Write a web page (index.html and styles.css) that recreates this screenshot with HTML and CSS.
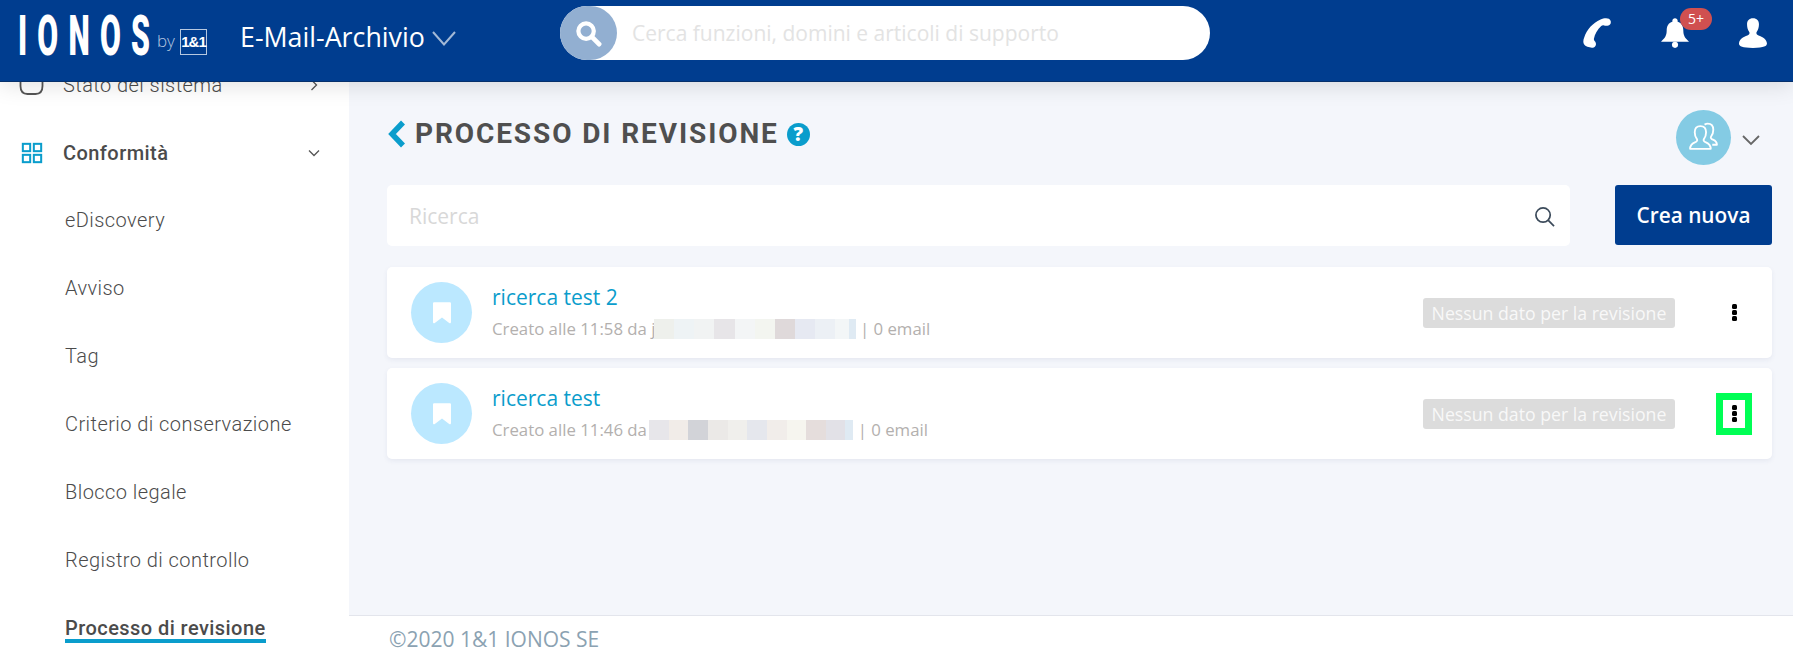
FILE: index.html
```html
<!DOCTYPE html>
<html lang="it">
<head>
<meta charset="utf-8">
<title>Processo di revisione</title>
<link rel="stylesheet" href="styles.css">
</head>
<body>
<header class="topbar">
  <div class="logo">
    <span class="logo-word">IONOS</span>
    <span class="logo-by">by</span>
    <span class="logo-box">1&amp;1</span>
  </div>
  <div class="product">E-Mail-Archivio
    <svg class="product-chev" viewBox="0 0 24 15"><path d="M1 1 12 13.500 23 1" fill="none" stroke="#a3b9d6" stroke-width="2"/></svg>
  </div>
  <div class="global-search">
    <div class="global-search-btn">
      <svg viewBox="0 0 28 28" class="global-search-ico"><circle cx="11.500" cy="11.500" r="8" fill="none" stroke="#fff" stroke-width="4.400"/><path d="M17.500 17.500 25 25" stroke="#fff" stroke-width="5" stroke-linecap="round"/></svg>
    </div>
    <span class="global-search-text">Cerca funzioni, domini e articoli di supporto</span>
  </div>
  <div class="top-icons">
    <svg class="ico-phone" viewBox="0 0 32 34"><path d="M31.500 3.500c.6 2.500-.5 4.500-2.500 5-2 .5-3.500.3-5 0-1.300-.3-2.200-.2-3.200.7C16.500 13 13.500 18.500 12.500 23.500c-.2 1.200.2 1.900 1 2.800.9 1 1.500 2.300 1.300 3.800-.3 2.500-2.200 3.900-4.500 3.500-3.300-.5-7.500-1-9-3.900C.2 28 .2 25 1.500 22 4.500 13 11 6 20 1.800 24 0 30.200-.8 31.500 3.500Z" fill="#fff"/></svg>
    <div class="bell-wrap">
      <svg class="ico-bell" viewBox="0 0 32 34"><path d="M16 0c1.700 0 3 1.200 3 2.800v1.400c4.500 1.300 6.500 5 6.500 10 0 6 2 8.500 6.500 12.800H0c4.500-4.300 6.500-6.800 6.500-12.800 0-5 2-8.700 6.500-10V2.800C13 1.200 14.300 0 16 0Z" fill="#fff"/><circle cx="16" cy="30.500" r="3.500" fill="#fff"/></svg>
      <span class="bell-badge">5+</span>
    </div>
    <svg class="ico-user" viewBox="0 0 32 34"><path d="M16 0c4.400 0 6.800 2.700 6.800 7 0 3.400-.8 6-2.300 8.200-.9 1.300-.9 3 .4 3.800 3.500 2 10.100 3.500 11 9.500.4 3-2 5.500-16 5.500S-.4 31.500 0 28.500c.9-6 7.500-7.500 11-9.500 1.300-.8 1.300-2.500.4-3.800C9.900 13 9.200 10.400 9.200 7 9.200 2.700 11.600 0 16 0Z" fill="#fff"/></svg>
  </div>
</header>

<div class="shell">
  <nav class="sidebar">
    <div class="nav-scroll">
      <div class="nav-group">
        <svg class="nav-ico nav-ico-wide" viewBox="0 0 25 24"><path d="M1.500 0v13c0 5 2 8 7 8h8c5 0 7-3 7-8V0" fill="none" stroke="#555" stroke-width="1.800"/></svg>
        <span class="nav-group-label">Stato del sistema</span>
        <svg class="nav-chev" viewBox="0 0 12 12"><path d="M3.500 1 8.500 6l-5 5" fill="none" stroke="#555" stroke-width="1.300"/></svg>
      </div>
      <div class="nav-group">
        <svg class="nav-ico" viewBox="0 0 24 24"><g fill="none" stroke="#0a9dcc" stroke-width="2.200"><rect x="2" y="2" width="8" height="8"/><rect x="14" y="2" width="8" height="8"/><rect x="2" y="14" width="8" height="8"/><rect x="14" y="14" width="8" height="8"/></g></svg>
        <span class="nav-group-label nav-group-label-open">Conformità</span>
        <svg class="nav-chev" viewBox="0 0 12 12"><path d="M1 3.500 6 8.500l5-5" fill="none" stroke="#555" stroke-width="1.300"/></svg>
      </div>
      <ul class="nav-list">
        <li class="nav-item">eDiscovery</li>
        <li class="nav-item">Avviso</li>
        <li class="nav-item">Tag</li>
        <li class="nav-item">Criterio di conservazione</li>
        <li class="nav-item">Blocco legale</li>
        <li class="nav-item">Registro di controllo</li>
        <li class="nav-item nav-item-active"><span class="nav-active-text">Processo di revisione</span></li>
      </ul>
    </div>
  </nav>

  <div class="content">
    <main class="main">
      <div class="title-row">
        <svg class="back" viewBox="0 0 18 28"><path d="M15 2.500 4 14l11 11.500" fill="none" stroke="#0a9dcc" stroke-width="5.500"/></svg>
        <h1 class="title">PROCESSO DI REVISIONE</h1>
        <span class="help">?</span>
        <div class="user-switch">
          <span class="avatar">
            <svg viewBox="0 0 32 32" class="avatar-ico"><g fill="none" stroke="#fff" stroke-width="1.800" stroke-linejoin="round"><path d="M13 5c3.600 0 5.500 2.400 5.500 6 0 2.800-.8 4.800-2 6.300-.7 1-.5 2.200.6 2.800 2.500 1.300 5.900 1.800 5.900 6.900H3c0-5.100 3.400-5.600 5.900-6.900 1.100-.6 1.300-1.800.6-2.800-1.200-1.500-2-3.500-2-6.300 0-3.600 1.900-6 5.500-6Z"/><path d="M17 3.500c1-.6 2-1 3-1 3.600 0 5.500 2.400 5.500 6 0 2.800-.8 4.800-2 6.300-.7 1-.5 2.200.6 2.800 2 1 4.900 1.400 4.900 5.400h-4.500"/></g></svg>
          </span>
          <svg class="user-chev" viewBox="0 0 18 11"><path d="M1 1l8 8 8-8" fill="none" stroke="#666" stroke-width="1.800"/></svg>
        </div>
      </div>

      <div class="toolbar">
        <div class="search-box">
          <span class="search-placeholder">Ricerca</span>
          <svg class="search-ico" viewBox="0 0 22 22"><circle cx="9.500" cy="9.500" r="7.500" fill="none" stroke="#3b4a5a" stroke-width="1.800"/><path d="M15 15l6 6" stroke="#3b4a5a" stroke-width="1.800"/></svg>
        </div>
        <button class="btn-new" type="button">Crea nuova</button>
      </div>

      <article class="card">
        <span class="card-badge"><svg viewBox="0 0 20 24" class="bookmark"><path d="M0 1.500C0 .6.600 0 1.500 0h17c.9 0 1.500.6 1.500 1.500V22c0 1.300-1.100 1.800-2 1l-8-6-8 6c-.9.8-2 .3-2-1Z" fill="#fff"/></svg></span>
        <div class="card-body">
          <div class="card-title">ricerca test 2</div>
          <div class="card-meta">Creato alle 11:58 da j<span class="blur blur-a"></span> | 0 email</div>
        </div>
        <span class="status">Nessun dato per la revisione</span>
        <span class="kebab-slot"><span class="kebab"><i></i><i></i><i></i></span></span>
      </article>

      <article class="card">
        <span class="card-badge"><svg viewBox="0 0 20 24" class="bookmark"><path d="M0 1.500C0 .6.600 0 1.500 0h17c.9 0 1.500.6 1.500 1.500V22c0 1.300-1.100 1.800-2 1l-8-6-8 6c-.9.8-2 .3-2-1Z" fill="#fff"/></svg></span>
        <div class="card-body">
          <div class="card-title">ricerca test</div>
          <div class="card-meta">Creato alle 11:46 da <span class="blur blur-b"></span> | 0 email</div>
        </div>
        <span class="status">Nessun dato per la revisione</span>
        <span class="kebab-slot kebab-slot-marked"><span class="kebab"><i></i><i></i><i></i></span></span>
      </article>
    </main>
    <footer class="footer">©2020 1&amp;1 IONOS SE</footer>
  </div>
</div>
</body>
</html>
```
FILE: styles.css
```css
* { box-sizing: border-box; }
html, body { margin: 0; padding: 0; height: 100%; }
body {
  width: 1793px;
  height: 656px;
  overflow: hidden;
  display: flex;
  flex-direction: column;
  font-family: "Open Sans", sans-serif;
  background: #f4f6fb;
}

/* top bar */
.topbar {
  flex: 0 0 82px;
  height: 82px;
  background: #003d8f;
  border-bottom: 1px solid #06306b;
  box-shadow: 0 3px 22px rgba(0, 0, 0, .12);
  display: flex;
  align-items: center;
  position: relative;
  z-index: 2;
  padding: 0 0 9px 18px;
}
.logo { display: flex; align-items: flex-end; width: 222px; height: 39px; color: #fff; }
.logo-word {
  font-family: "Roboto", sans-serif;
  font-size: 55px;
  font-weight: 900;
  line-height: 39px;
  height: 39px;
  letter-spacing: 18.600px;
  transform: scaleX(.55);
  transform-origin: left center;
  width: 139px;
  flex: none;
}
.logo-by { font-size: 17px; line-height: 24px; color: #b6c8e0; font-weight: 300; margin-bottom: 3px; width: 23px; }
.logo-box {
  width: 27px;
  height: 26px;
  margin-bottom: 1px;
  border: 1px solid #b6c8e0;
  color: #fff;
  font-family: "Liberation Sans", sans-serif;
  font-weight: 700;
  font-size: 15px;
  letter-spacing: -1px;
  line-height: 24px;
  text-align: center;
}
.product { display: flex; align-items: center; color: #fff; font-size: 26.800px; width: 320px; gap: 7px; }
.product-chev { width: 24px; height: 15px; margin-top: 4px; }
.global-search {
  width: 650px;
  height: 54px;
  background: #fff;
  border-radius: 27px;
  display: flex;
  align-items: center;
  margin-top: -6px;
}
.global-search-btn {
  width: 57px;
  height: 54px;
  border-radius: 27px;
  background: #92afd1;
  display: flex;
  align-items: center;
  justify-content: center;
}
.global-search-ico { width: 27px; height: 27px; }
.global-search-text { font-size: 21px; color: #e3e3e3; margin-left: 15px; }
.top-icons { display: flex; align-items: center; margin-left: 372px; margin-top: -6px; }
.ico-phone { width: 30px; height: 30px; }
.bell-wrap { position: relative; width: 28px; height: 30px; margin-left: 49px; }
.ico-bell { width: 28px; height: 30px; display: block; }
.bell-badge {
  position: absolute;
  left: 19px;
  top: -10px;
  width: 32px;
  height: 22px;
  border-radius: 11px;
  background: #d05050;
  color: #fff;
  font-size: 14px;
  line-height: 22px;
  text-align: center;
}
.ico-user { width: 28px; height: 30px; margin-left: 50px; }

/* shell */
.shell { flex: 1; display: flex; min-height: 0; }
.sidebar {
  flex: 0 0 349px;
  background: #fff;
  overflow: hidden;
  font-family: "Roboto", sans-serif;
}
.nav-scroll { margin-top: -31px; }
.nav-group {
  height: 67.700px;
  display: flex;
  align-items: center;
  padding-left: 21px;
  padding-right: 29px;
}
.nav-ico { width: 22px; height: 22px; flex: none; }
.nav-ico-wide { width: 25px; height: 24px; margin-left: -2px; margin-right: -1px; }
.nav-group-label { margin-left: 20px; flex: 1; font-size: 20px; letter-spacing: .44px; font-weight: 300; color: #4b4b4b; }
.nav-group-label-open { font-weight: 500; }
.nav-chev { width: 12px; height: 12px; flex: none; }
.nav-list { list-style: none; margin: 1px 0 0; padding: 0 0 0 65px; }
.nav-item {
  height: 67.900px;
  line-height: 67.900px;
  font-size: 20px;
  letter-spacing: .44px;
  font-weight: 300;
  color: #4b4b4b;
  white-space: nowrap;
}
.nav-item-active { font-weight: 500; }
.nav-active-text {
  display: inline-block;
  line-height: 22px;
  border-bottom: 4px solid #0a9dcc;
}

/* content */
.content { flex: 1; display: flex; flex-direction: column; min-width: 0; }
.main { flex: 1; padding: 0 21px 0 38px; }
.title-row { display: flex; align-items: center; height: 103px; }
.back { width: 18px; height: 28px; flex: none; margin-left: 1px; }
.title {
  margin: 0 0 0 9px;
  font-family: "Roboto", sans-serif;
  font-size: 28px;
  font-weight: 700;
  letter-spacing: 1.900px;
  color: #4f4f4f;
}
.help {
  width: 23px;
  height: 23px;
  border-radius: 50%;
  background: #0a9dcc;
  color: #fff;
  font-weight: 800;
  font-size: 19px;
  line-height: 23px;
  text-align: center;
  margin: 2px 0 0 8px;
}
.user-switch { margin-left: auto; display: flex; align-items: center; margin-right: 12px; margin-top: 7px; }
.avatar {
  width: 55px;
  height: 55px;
  border-radius: 50%;
  background: #84cbe4;
  display: flex;
  align-items: center;
  justify-content: center;
}
.avatar-ico { width: 33px; height: 33px; }
.user-chev { width: 18px; height: 11px; margin-left: 11px; margin-top: 6px; }
.toolbar { display: flex; justify-content: space-between; height: 61px; margin-bottom: 21px; }
.search-box {
  width: 1183px;
  background: #fff;
  border-radius: 5px;
  display: flex;
  align-items: center;
  justify-content: space-between;
  padding: 0 15px 0 22px;
}
.search-placeholder { font-size: 21px; color: #d8d8d8; }
.search-ico { width: 21px; height: 21px; margin-top: 1px; }
.btn-new {
  width: 157px;
  height: 60px;
  border: 0;
  border-radius: 3px;
  background: #003d8f;
  color: #fff;
  font-family: "Open Sans", sans-serif;
  font-size: 20.800px;
  font-weight: 600;
}
.card {
  height: 91px;
  background: #fff;
  border-radius: 5px;
  box-shadow: 0 2px 5px rgba(40, 60, 110, .07);
  display: flex;
  align-items: center;
  margin-bottom: 10px;
  padding-left: 24px;
}
.card-badge {
  width: 61px;
  height: 61px;
  border-radius: 50%;
  background: #bbe8ff;
  display: flex;
  align-items: center;
  justify-content: center;
  flex: none;
}
.bookmark { width: 18px; height: 22px; }
.card-body { margin-left: 20px; flex: 1; min-width: 0; margin-top: -2px; }
.card-title { font-size: 21px; color: #0a9dcc; line-height: 30px; }
.card-meta { font-size: 16.800px; color: #b3b0ae; line-height: 24px; margin-top: 5px; display: flex; align-items: center; white-space: pre; }
.blur { display: inline-block; height: 20px; width: 202px; }
.blur-a {
  margin-left: -2px;
  background: linear-gradient(90deg,
    #eef0ec 0 20px, #eef3f5 20px 40px, #f1f3f3 40px 60px, #e7e5e8 60px 81px, #f3f5f6 81px 101px,
    #f3f5f0 101px 121px, #dfd9da 121px 141px, #e6e9f2 141px 161px, #ecf0f5 161px 181px, #f3f6f7 181px 195px, #dfeaf3 195px 202px);
}
.blur-b {
  margin-left: -2px;
  width: 204px;
  background: linear-gradient(90deg,
    #e7e6ea 0 20px, #f1ece8 20px 39px, #d2d3d8 39px 59px, #ebe9e7 59px 79px, #f0efec 79px 98px,
    #e5e7ed 98px 118px, #f1edea 118px 138px, #f6f5ef 138px 157px, #e5dddc 157px 177px, #e2e1e7 177px 196px,
    #dfeaf3 196px 204px);
}
.status {
  width: 252px;
  height: 30px;
  line-height: 30px;
  background: #dcdcdc;
  border-radius: 3px;
  color: #f8f8f8;
  font-size: 17.700px;
  text-align: center;
  flex: none;
}
.kebab-slot {
  width: 36px;
  height: 42px;
  margin: 0 20px 0 41px;
  display: flex;
  align-items: center;
  justify-content: center;
  flex: none;
}
.kebab-slot-marked { border: 7px solid #00ff55; }
.kebab { display: flex; flex-direction: column; gap: 1px; }
.kebab i { display: block; width: 5px; height: 5px; border-radius: 1.500px; background: #000; }
.footer {
  flex: 0 0 41px;
  height: 41px;
  background: #fff;
  border-top: 1px solid #e3e5ec;
  padding-left: 40px;
  color: #8ba2b2;
  font-size: 21px;
  font-weight: 400;
  line-height: 47px;
}
```
